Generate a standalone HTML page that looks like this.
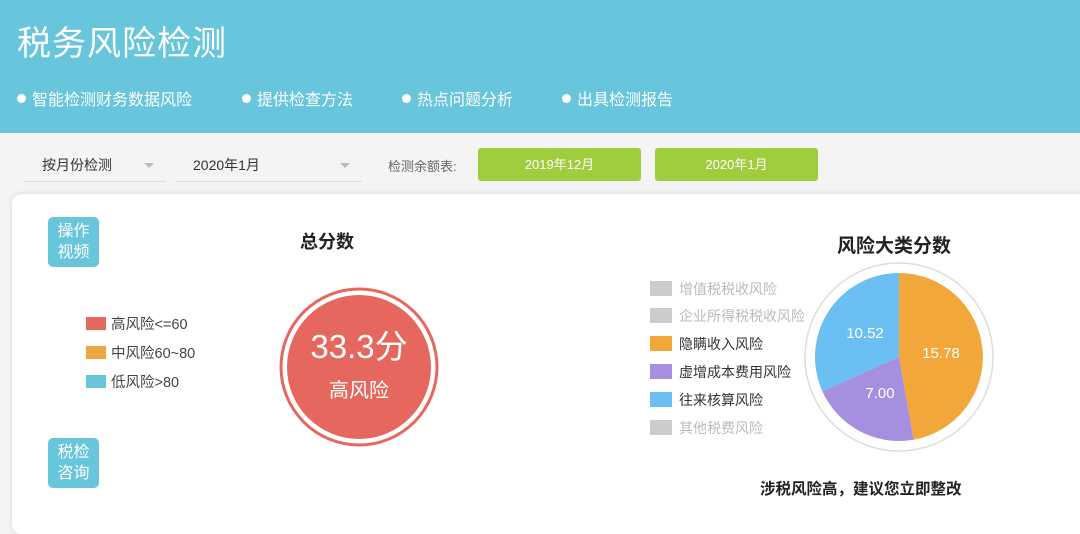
<!DOCTYPE html>
<html><head><meta charset="utf-8"><style>
*{margin:0;padding:0;box-sizing:border-box}
body{width:1080px;height:517px;overflow:hidden;background:#f4f4f4;font-family:"Liberation Sans","Noto Sans CJK SC",sans-serif;position:relative;color:#333}
.hdr{position:absolute;left:0;top:0;width:1080px;height:133px;background:#67c5dc;color:#fff}
.hdr h1{position:absolute;left:17px;top:16px;font-size:34px;font-weight:normal;letter-spacing:1px}
.hdr .it{position:absolute;top:86px;font-size:16px}
.hdr .it:before{content:"";display:inline-block;width:9px;height:9px;border-radius:50%;background:#fff;margin-right:6px;vertical-align:2px}
.abs{position:absolute}
.sel{position:absolute;top:148px;height:34px;border-bottom:1px solid #ddd;font-size:14px;line-height:34px;padding-left:18px}
.sel .ar{position:absolute;right:12px;top:15px;border:5px solid transparent;border-top:5px solid #bbb}
.btn{position:absolute;top:148px;height:33px;width:163px;background:#9fcd3d;border-radius:3px;color:#fff;font-size:13px;text-align:center;line-height:33px}
.card{position:absolute;left:12px;top:194px;width:1080px;height:340px;background:#fff;border-radius:10px;box-shadow:0 0 6px rgba(0,0,0,.12)}
.tag{position:absolute;left:48px;width:51px;height:50px;background:#67c5dc;border-radius:5px;color:#fff;font-size:16px;line-height:21px;text-align:center;padding-top:4px}
.lg{position:absolute;font-size:14.5px;color:#444}
.lg i{display:inline-block;width:20px;height:13px;margin-right:5px;vertical-align:-1px}
.pl{position:absolute;left:650px;font-size:14px;color:#333}
.pl i{display:inline-block;width:22px;height:15px;margin-right:7px;vertical-align:-2px}
.pl.g{color:#bbb}
</style></head><body>
<div class="hdr"><h1>税务风险检测</h1>
<div class="it" style="left:17px">智能检测财务数据风险</div>
<div class="it" style="left:242px">提供检查方法</div>
<div class="it" style="left:402px">热点问题分析</div>
<div class="it" style="left:562px">出具检测报告</div></div>
<div class="sel" style="left:24px;width:142px;padding-left:18px">按月份检测<span class="ar"></span></div>
<div class="sel" style="left:175px;width:187px">2020年1月<span class="ar"></span></div>
<div class="abs" style="left:388px;top:156px;font-size:13px;color:#666">检测余额表:</div>
<div class="btn" style="left:478px">2019年12月</div>
<div class="btn" style="left:655px">2020年1月</div>
<div class="card"></div>
<div class="tag" style="top:217px">操作<br>视频</div>
<div class="tag" style="top:438px">税检<br>咨询</div>
<div class="lg" style="left:86px;top:313px"><i style="background:#e5675e"></i>高风险&lt;=60</div>
<div class="lg" style="left:86px;top:342px"><i style="background:#eea73e"></i>中风险60~80</div>
<div class="lg" style="left:86px;top:371px"><i style="background:#67c5dc"></i>低风险&gt;80</div>
<div class="abs" style="left:300px;top:228px;font-size:18px;font-weight:bold;color:#222">总分数</div>
<svg class="abs" style="left:0;top:0" width="1080" height="517">
<circle cx="359" cy="367" r="78" fill="none" stroke="#e5675e" stroke-width="3"/>
<circle cx="359" cy="367" r="72" fill="#e5675e"/>
<text x="359" y="358" font-size="33" fill="#fff" text-anchor="middle" font-family="Liberation Sans,Noto Sans CJK SC,sans-serif">33.3分</text>
<text x="359" y="397" font-size="20" fill="#fff" text-anchor="middle" font-family="Liberation Sans,Noto Sans CJK SC,sans-serif">高风险</text>
<circle cx="899" cy="357" r="94" fill="#fff" stroke="#ddd" stroke-width="1.5"/>
<path d="M899 357 L899 273 A84 84 0 0 1 913.6 439.7 Z" fill="#f2a73b"/>
<path d="M899 357 L913.6 439.7 A84 84 0 0 1 822.3 391.2 Z" fill="#a78fe0"/>
<path d="M899 357 L822.3 391.2 A84 84 0 0 1 899 273 Z" fill="#6bbff2"/>
<g font-size="15" fill="#fff" text-anchor="middle" font-family="Liberation Sans,sans-serif">
<text x="865" y="338">10.52</text><text x="941" y="358">15.78</text><text x="880" y="398">7.00</text></g>
</svg>
<div class="abs" style="left:837px;top:231px;font-size:19px;font-weight:bold;color:#222">风险大类分数</div>
<div class="pl g" style="top:279px"><i style="background:#ccc"></i>增值税税收风险</div>
<div class="pl g" style="top:306px"><i style="background:#ccc"></i>企业所得税税收风险</div>
<div class="pl" style="top:334px"><i style="background:#f2a73b"></i>隐瞒收入风险</div>
<div class="pl" style="top:362px"><i style="background:#a78fe0"></i>虚增成本费用风险</div>
<div class="pl" style="top:390px"><i style="background:#6bbff2"></i>往来核算风险</div>
<div class="pl g" style="top:418px"><i style="background:#ccc"></i>其他税费风险</div>
<div class="abs" style="left:760px;top:477px;font-size:15.5px;font-weight:bold;color:#222">涉税风险高，建议您立即整改</div>
</body></html>
